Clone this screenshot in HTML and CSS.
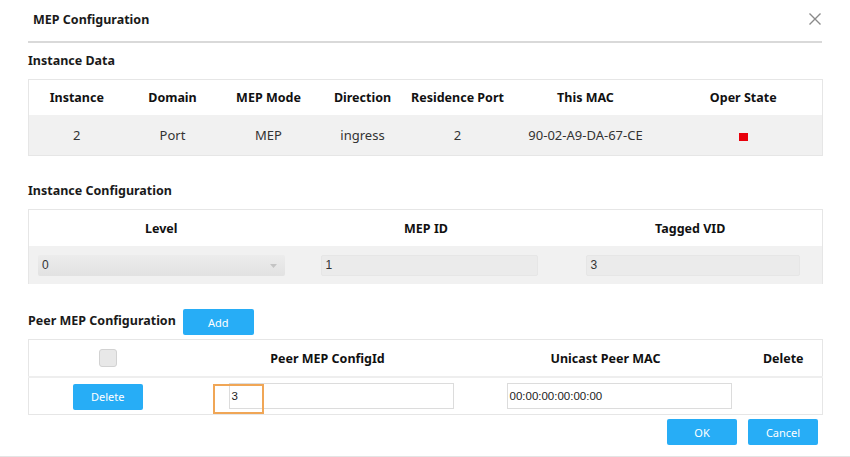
FILE: index.html
```html
<!DOCTYPE html>
<html>
<head>
<meta charset="utf-8">
<link rel="stylesheet" href="styles.css">
</head>
<body>
<div class="dialog">
  <div class="head">
    <span class="title">MEP Configuration</span>
    <span class="close">
      <svg width="14" height="14" viewBox="0 0 14 14"><path d="M1.5 1.5 L12.5 12.5 M12.5 1.5 L1.5 12.5" stroke="#8a8a8a" stroke-width="1.4" fill="none"/></svg>
    </span>
  </div>
  <div class="content">
    <div class="sec-title first">Instance Data</div>
    <table class="grid t1">
      <colgroup><col style="width:96px"><col style="width:96px"><col style="width:96px"><col style="width:92px"><col style="width:98px"><col style="width:158px"><col></colgroup>
      <thead><tr><th>Instance</th><th>Domain</th><th>MEP Mode</th><th>Direction</th><th>Residence Port</th><th>This MAC</th><th>Oper State</th></tr></thead>
      <tbody><tr><td>2</td><td>Port</td><td>MEP</td><td>ingress</td><td>2</td><td>90-02-A9-DA-67-CE</td><td><span class="state"></span></td></tr></tbody>
    </table>

    <div class="sec-title second">Instance Configuration</div>
    <table class="grid t2">
      <colgroup><col style="width:265px"><col style="width:265px"><col></colgroup>
      <thead><tr><th>Level</th><th>MEP ID</th><th>Tagged VID</th></tr></thead>
      <tbody><tr>
        <td class="c-level"><div class="field select"><span>0</span><svg class="caret" width="7" height="4" viewBox="0 0 7 4"><path d="M0 0 L7 0 L3.5 4 Z" fill="#c4c4c4"/></svg></div></td>
        <td class="c-id"><div class="field"><span>1</span></div></td>
        <td class="c-vid"><div class="field"><span>3</span></div></td>
      </tr></tbody>
    </table>

    <div class="peer-bar">
      <span class="sec-title inline">Peer MEP Configuration</span>
      <button class="btn add">Add</button>
    </div>
    <table class="grid t3">
      <colgroup><col style="width:160px"><col style="width:278px"><col style="width:278px"><col></colgroup>
      <thead><tr><th><span class="check"></span></th><th>Peer MEP ConfigId</th><th>Unicast Peer MAC</th><th>Delete</th></tr></thead>
      <tbody><tr>
        <td><button class="btn del">Delete</button></td>
        <td class="c-in"><div class="txt focus-wrap"><span class="val">3</span><span class="focus-box"></span></div></td>
        <td class="c-in"><div class="txt"><span class="val mac">00:00:00:00:00:00</span></div></td>
        <td></td>
      </tr></tbody>
    </table>
  </div>
  <div class="foot">
    <button class="btn ok">OK</button>
    <button class="btn cancel">Cancel</button>
  </div>
</div>
</body>
</html>
```

FILE: styles.css
```css
html, body {
  margin: 0;
  padding: 0;
  background: #ffffff;
}
body {
  font-family: "Noto Sans", "Open Sans", sans-serif;
  color: #1a1a1a;
  width: 850px;
  height: 457px;
  overflow: hidden;
}
.dialog {
  width: 850px;
  height: 456px;
  border-bottom: 1px solid #e4e4e4;
  display: flex;
  flex-direction: column;
}
.head {
  margin: 0 28px 0 28px;
  height: 41px;
  border-bottom: 2px solid #d9d9d9;
  display: flex;
  align-items: center;
  justify-content: space-between;
}
.title {
  font-size: 12.5px;
  font-weight: bold;
  padding-left: 5px;
  margin-top: -3px;
}
.close {
  display: flex;
  margin-top: -4px;
  margin-right: 0px;
}
.content {
  padding: 0 27px 0 28px;
}
.sec-title {
  font-size: 12.5px;
  font-weight: bold;
  line-height: 18px;
  color: #1a1a1a;
}
.sec-title.first { margin-top: 9px; margin-bottom: 9px; }
.sec-title.second { margin-top: 26px; margin-bottom: 9px; }
.grid {
  width: 795px;
  border-collapse: collapse;
  table-layout: fixed;
  border: 1px solid #e6e6e6;
}
.grid th {
  font-size: 12.5px;
  font-weight: bold;
  text-align: center;
  background: #fff;
  padding: 0;
  color: #111;
}
.grid td {
  font-size: 13px;
  text-align: center;
  padding: 0;
  color: #333;
}
.t1 th { height: 35px; }
.t1 td { height: 40px; background: #f1f1f1; }
.state {
  display: inline-block;
  width: 9px;
  height: 8px;
  background: #e8000b;
  vertical-align: middle;
}
.t2 th { height: 36px; }
.t2 td {
  height: 38px;
  background: #f1f1f1;
  border-bottom: 2px solid #fff;
  text-align: left;
}
.field {
  height: 21px;
  background: #ebebeb;
  border-radius: 2px;
  display: flex;
  align-items: center;
  justify-content: space-between;
  font-family: "Liberation Sans", Arial, sans-serif;
  font-size: 12px;
  color: #333;
  padding-left: 4px;
  box-sizing: border-box;
}
.select {
  background: linear-gradient(#ececec, #e2e2e2);
  padding-right: 8px;
}
.caret { margin-top: 1px; }
.c-level { padding: 0 9px 0 9px !important; }
.c-id { padding: 0 21px 0 27px !important; }
.c-vid { padding: 0 22px 0 27px !important; }
.c-id .field, .c-vid .field { background: #ebebeb; border: 1px solid #e6e6e6; }
.peer-bar {
  margin-top: 23px;
  height: 26px;
  display: flex;
  align-items: center;
  gap: 7px;
}
.sec-title.inline { margin-top: -2px; }
.btn {
  border: none;
  border-radius: 2px;
  background: #27adf6;
  color: #fff;
  font-family: "Noto Sans", "Open Sans", sans-serif;
  font-size: 11px;
  width: 71px;
  height: 26px;
  padding: 0;
  cursor: pointer;
}
.t3 { margin-top: 4px; }
.t3 th { height: 36px; border-bottom: 2px solid #eeeeee; }
.t3 td { height: 36px; background: #fff; }
.check {
  display: inline-block;
  width: 16px;
  height: 16px;
  border: 1px solid #d2d2d2;
  border-radius: 3px;
  background: #e8e8e8;
  vertical-align: middle;
  margin-left: -1px;
}
.btn.del { width: 70px; margin-left: -2px; margin-top: 1px; }
.c-in { padding: 0 13px 0 40px !important; text-align: left !important; }
.txt {
  position: relative;
  height: 26px;
  border: 1px solid #dcdcdc;
  box-sizing: border-box;
  background: #fff;
  display: flex;
  align-items: center;
  padding-left: 2px;
  font-family: "Liberation Sans", Arial, sans-serif;
  font-size: 11.5px;
  color: #222;
}
.focus-box {
  position: absolute;
  z-index: 2;
  left: -17px;
  top: 0px;
  width: 51px;
  height: 30px;
  border: 2px solid #f0a656;
  box-sizing: border-box;
  background: transparent;
}
.foot {
  display: flex;
  justify-content: flex-end;
  gap: 11px;
  padding-right: 32px;
  margin-top: 4px;
}
.btn.ok, .btn.cancel { width: 70px; }
```
